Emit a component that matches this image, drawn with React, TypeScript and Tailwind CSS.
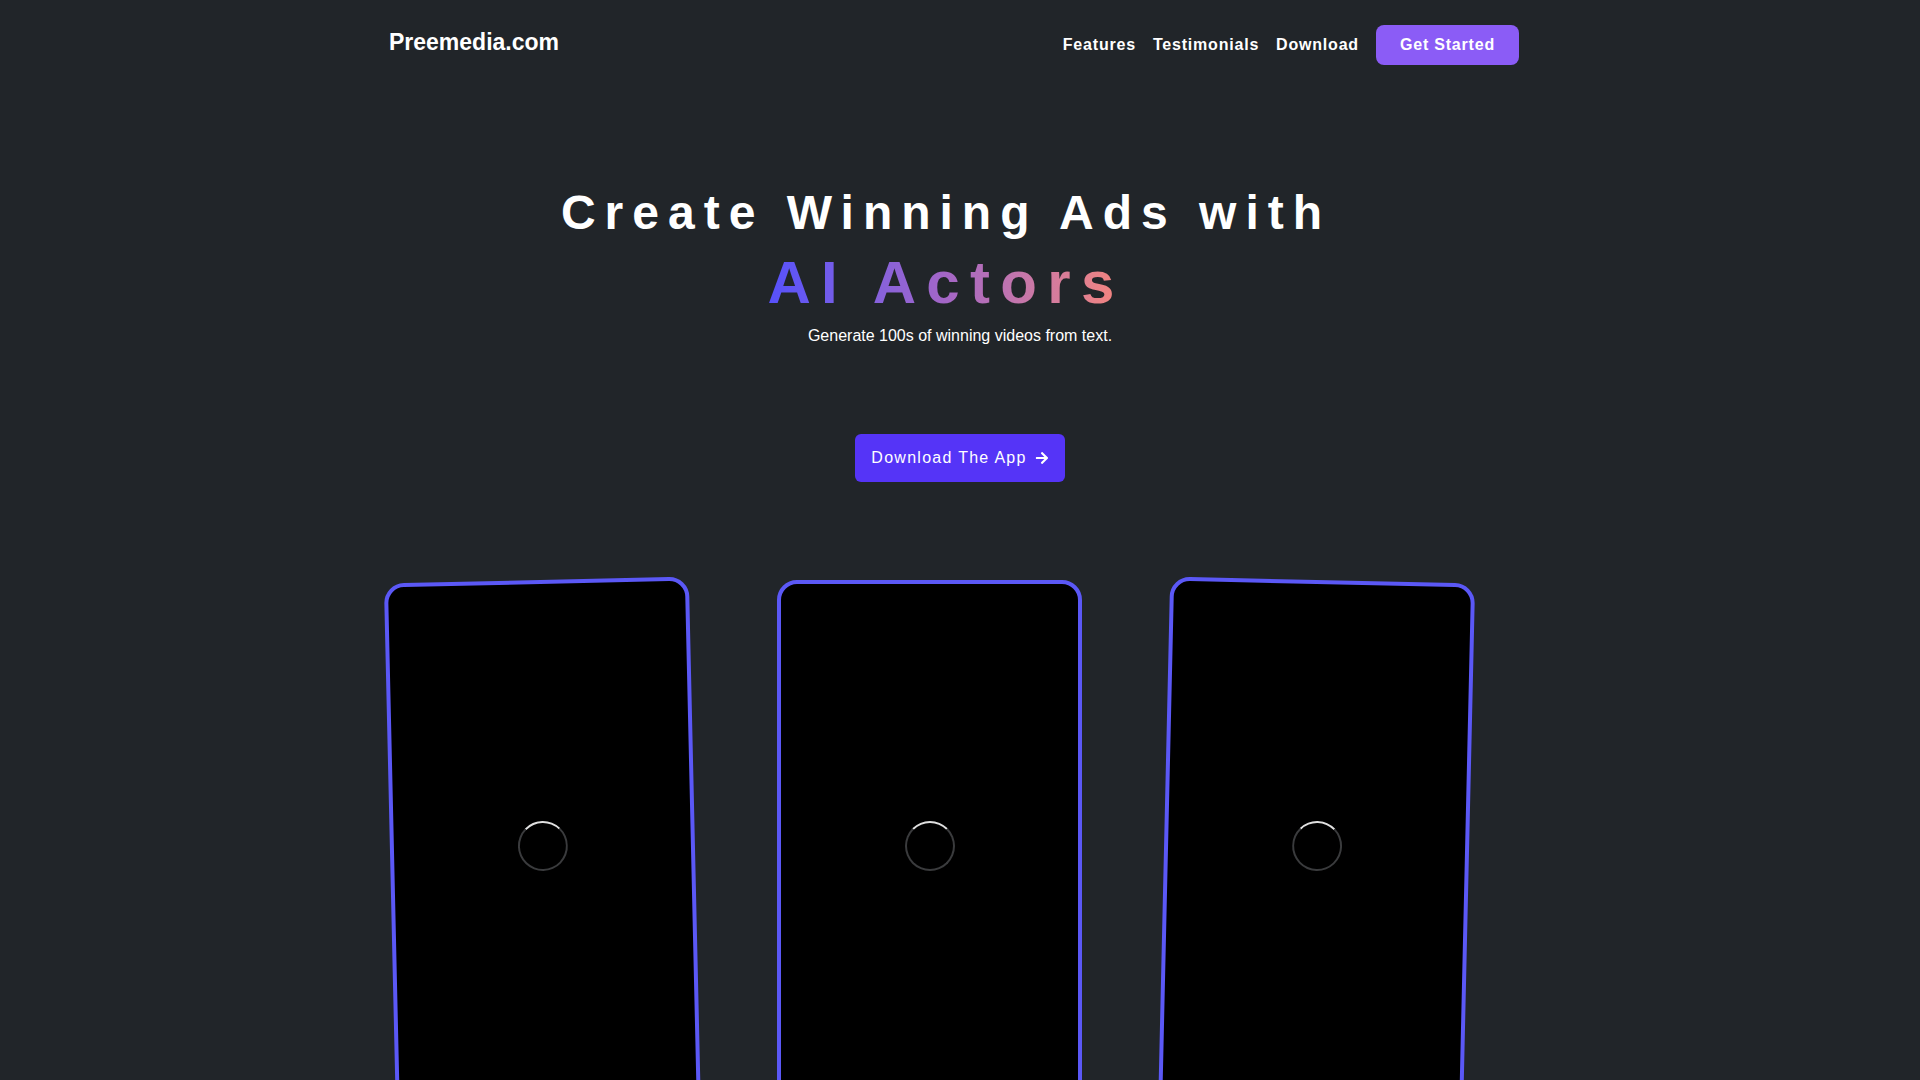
import { FaArrowRight } from "react-icons/fa";

const navLinks = ["Features", "Testimonials", "Download"];

const phones = [
  { id: "left", tilt: "-rotate-[1.3deg]" },
  { id: "middle", tilt: "" },
  { id: "right", tilt: "rotate-[1.3deg]" },
];

function Spinner() {
  return <div className="size-[50px] rounded-full border-2 border-[#3a3b3d] border-t-[#e0e0e0]" />;
}

export default function App() {
  return (
    <main className="h-screen overflow-hidden bg-[#212529] font-['Liberation_Sans',Arial,sans-serif] text-white">
      <div className="mx-auto w-[1142px]">
        <header className="flex items-start justify-between pt-[25px]">
          <a href="#" className="mt-px text-[23px] leading-8 font-bold text-white">
            Preemedia.com
          </a>
          <nav className="mr-3 flex items-center gap-[17px]">
            {navLinks.map((link) => (
              <a key={link} href="#" className="text-base font-bold tracking-wider text-white">
                {link}
              </a>
            ))}
            <button className="rounded-lg bg-[#8b5cf6] px-6 py-2 text-base font-bold tracking-wider text-white">
              Get Started
            </button>
          </nav>
        </header>

        <section className="flex flex-col items-center">
          <h1 className="mt-[124px] w-full pr-[28px] text-center text-5xl leading-none font-bold text-white">
            <span className="block tracking-[9px]">Create Winning Ads with</span>
            <span className="mt-4 block">
              <span className="inline-block bg-linear-to-r from-[#5650fc] via-[#a466c6] to-[#f6857a] bg-clip-text text-6xl leading-none tracking-[10.3px] text-transparent">
                AI Actors
              </span>
            </span>
          </h1>
          <p className="mt-[11px] text-base leading-6 text-white">Generate 100s of winning videos from text.</p>

          <button className="mt-[86px] flex items-center gap-2 rounded-md bg-[#5534f7] px-4 py-3 text-base leading-6 tracking-[0.08em] text-white">
            Download The App
            <FaArrowRight size={14} />
          </button>
        </section>

        <section className="mt-[98px] ml-px flex gap-[82px]">
          {phones.map((phone) => (
            <div
              key={phone.id}
              className={`flex h-[540px] w-[305px] shrink-0 items-center justify-center rounded-[20px] border-4 border-[#5b58f6] bg-black pb-2 ${phone.tilt}`}
            >
              <Spinner />
            </div>
          ))}
        </section>
      </div>
    </main>
  );
}
